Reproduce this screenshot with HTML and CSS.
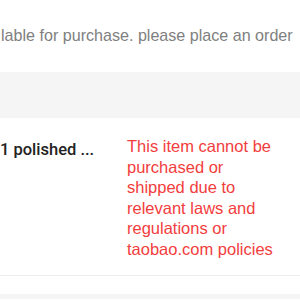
FILE: index.html
```html
<!DOCTYPE html>
<html>
<head>
<meta charset="utf-8">
<link rel="stylesheet" href="styles.css">
</head>
<body>
<div class="notice">lable for purchase. please place an order</div>
<div class="band"></div>
<div class="row">
  <div class="name">1 polished ...</div>
  <div class="reason">This item cannot be purchased or shipped due to relevant laws and regulations or taobao.com policies</div>
</div>
<div class="gap"></div>
<div class="band band-end"></div>
</body>
</html>
```
FILE: styles.css
```css
html, body {
  margin: 0;
  padding: 0;
  background: #ffffff;
  font-family: "Liberation Sans", Arial, sans-serif;
  overflow: hidden;
}
.notice {
  height: 72px;
  box-sizing: border-box;
  padding: 25px 0 0 1px;
  font-size: 16.1px;
  line-height: 20px;
  color: #808080;
  white-space: nowrap;
}
.band {
  height: 46px;
  background: #f5f5f5;
}
.band-end {
  height: 5px;
}
.row {
  display: flex;
  height: 158px;
  box-sizing: border-box;
  border-bottom: 1px solid #eeeeee;
}
.name {
  width: 127px;
  padding-top: 22px;
  font-family: Roboto, "Liberation Sans", sans-serif;
  font-size: 16.5px;
  line-height: 20px;
  font-weight: 500;
  color: #222222;
}
.reason {
  width: 152px;
  padding-top: 18px;
  font-size: 16.5px;
  line-height: 20.5px;
  color: #f23d3d;
}
.gap {
  height: 18px;
}
```
